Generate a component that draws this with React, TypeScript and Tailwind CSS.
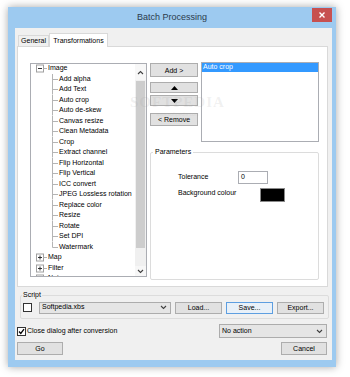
import React from "react";

const children = [
  "Add alpha",
  "Add Text",
  "Auto crop",
  "Auto de-skew",
  "Canvas resize",
  "Clean Metadata",
  "Crop",
  "Extract channel",
  "Flip Horizontal",
  "Flip Vertical",
  "ICC convert",
  "JPEG Lossless rotation",
  "Replace color",
  "Resize",
  "Rotate",
  "Set DPI",
  "Watermark",
];

function Chevron({ up = false }: { up?: boolean }) {
  return (
    <svg width="7" height="5" viewBox="0 0 7 5">
      <polyline
        points={up ? "1,4 3.5,1.5 6,4" : "1,1 3.5,3.5 6,1"}
        fill="none"
        stroke="#404040"
        strokeWidth="1.1"
      />
    </svg>
  );
}

function RootRow({ label, open }: { label: string; open: boolean }) {
  return (
    <div className="flex h-[10.5px] items-center">
      <svg width="16" height="10.5" viewBox="0 0 16 10.5" className="shrink-0">
        <rect x="5.5" y="2" width="7" height="7" fill="#fff" stroke="#a0a0a0" strokeWidth="1" />
        <line x1="7" y1="5.5" x2="11" y2="5.5" stroke="#333" strokeWidth="1" />
        {!open && <line x1="9" y1="3.5" x2="9" y2="7.5" stroke="#333" strokeWidth="1" />}
        <line x1="12.5" y1="5.5" x2="16" y2="5.5" stroke="#b4b4b4" strokeWidth="1" />
      </svg>
      <span className="whitespace-nowrap pl-px">{label}</span>
    </div>
  );
}

function ChildRow({ label, last }: { label: string; last: boolean }) {
  return (
    <div className="flex h-[10.5px] items-center">
      <svg width="28" height="10.5" viewBox="0 0 28 10.5" className="shrink-0">
        <line x1="21.5" y1="0" x2="21.5" y2={last ? 5.5 : 10.5} stroke="#b4b4b4" strokeWidth="1" />
        <line x1="21.5" y1="5.5" x2="27" y2="5.5" stroke="#b4b4b4" strokeWidth="1" />
      </svg>
      <span className="whitespace-nowrap">{label}</span>
    </div>
  );
}

function TreeView() {
  return (
    <div className="flex h-[214px] w-[117px] shrink-0 border border-[#abadb3] bg-white">
      <div className="flex-1 overflow-hidden">
        <div className="-mt-px">
          <RootRow label="Image" open />
          {children.map((c, i) => (
            <ChildRow key={c} label={c} last={i === children.length - 1} />
          ))}
          <RootRow label="Map" open={false} />
          <RootRow label="Filter" open={false} />
          <RootRow label="Noise" open={false} />
        </div>
      </div>
      <div className="flex w-[11px] flex-col bg-[#f0f0f0]">
        <div className="flex h-[16px] items-center justify-center bg-[#f7f7f7]">
          <Chevron up />
        </div>
        <div className="mx-px mt-px h-[167px] bg-[#cdcdcd]" />
        <div className="flex-1" />
        <div className="flex h-[10px] items-center justify-center bg-[#f7f7f7]">
          <Chevron />
        </div>
      </div>
    </div>
  );
}

function Btn({
  children,
  className = "",
  focused = false,
}: {
  children: React.ReactNode;
  className?: string;
  focused?: boolean;
}) {
  return (
    <div
      className={
        "flex items-center justify-center border text-[7px] leading-none " +
        (focused ? "border-[#5d9ee0] bg-[#e8f0f8] " : "border-[#adadad] bg-[#e1e1e1] ") +
        className
      }
    >
      {children}
    </div>
  );
}

function Combo({ value, className = "" }: { value: string; className?: string }) {
  return (
    <div
      className={
        "flex items-center justify-between border border-[#acacac] bg-[#e5e5e5] pl-[2px] pr-[3px] text-[7px] " +
        className
      }
    >
      <span>{value}</span>
      <Chevron />
    </div>
  );
}

function CheckBox({ checked = false }: { checked?: boolean }) {
  return (
    <div className="flex h-[9px] w-[9px] shrink-0 items-center justify-center border border-[#333] bg-white">
      {checked && (
        <svg width="7" height="7" viewBox="0 0 7 7">
          <polyline points="1,3.5 2.8,5.5 6,1.2" fill="none" stroke="#000" strokeWidth="1.3" />
        </svg>
      )}
    </div>
  );
}

export default function App() {
  return (
    <div className="h-[377px] w-[350px] overflow-hidden bg-white pl-[8px] pt-[7px] font-['Liberation_Sans',Arial,sans-serif] text-black">
      <div className="relative flex h-[360px] w-[328px] flex-col bg-[#9dcaf0] shadow-[0_0_8px_rgba(0,0,0,0.35)]">
        {/* title bar */}
        <div className="relative flex h-[21px] items-center justify-center text-[9px] text-[#2c3b4c]">
          Batch Processing
          <div className="absolute right-[4px] top-[1px] flex h-[14px] w-[20px] items-center justify-center bg-[#c75050]">
            <svg width="6" height="6" viewBox="0 0 6 6">
              <path d="M0.5 0.5 L5.5 5.5 M5.5 0.5 L0.5 5.5" stroke="#fff" strokeWidth="1.4" />
            </svg>
          </div>
        </div>

        {/* client */}
        <div className="mb-[7px] ml-[7px] mr-[4px] flex flex-1 flex-col bg-[#f0f0f0] pb-[5px] pt-[5px] text-[7px]">
          {/* tabs */}
          <div className="relative z-10 flex h-[13px] items-end pl-[3px]">
            <div className="flex h-[11px] w-[31px] items-center justify-center border border-b-0 border-[#d9d9d9] bg-[#f0f0f0]">
              General
            </div>
            <div className="-mb-px flex h-[14px] w-[59px] items-start justify-center border border-b-0 border-[#d9d9d9] bg-white pt-[2px]">
              Transformations
            </div>
          </div>

          <div className="ml-[2px] flex h-[241px] w-[311px] border border-[#d9d9d9] bg-white pl-[12px] pt-[16px]">
            <TreeView />

            <div className="-mt-px ml-[3px] flex w-[169px] flex-col">
              <div className="flex">
                <div className="flex w-[48px] flex-col pt-px">
                  <Btn className="h-[14px]">Add &gt;</Btn>
                  <Btn className="mt-[5px] h-[11px]">
                    <svg width="7" height="4" viewBox="0 0 7 4">
                      <polygon points="0,4 3.5,0 7,4" fill="#000" />
                    </svg>
                  </Btn>
                  <Btn className="mt-[2px] h-[11px]">
                    <svg width="7" height="4" viewBox="0 0 7 4">
                      <polygon points="0,0 7,0 3.5,4" fill="#000" />
                    </svg>
                  </Btn>
                  <Btn className="mt-[7px] h-[13px]">&lt; Remove</Btn>
                </div>
                <div className="ml-[3px] h-[80px] w-[118px] border border-[#abadb3] bg-white">
                  <div className="flex h-[9px] items-center bg-[#3399ff] pl-px text-white">Auto crop</div>
                </div>
              </div>

              <fieldset className="mt-[6px] h-[132px] rounded-[2px] border border-[#dcdcdc]">
                <legend className="ml-[2px] px-[2px] leading-[8px]">Parameters</legend>
                <div className="flex flex-col pl-[27px] pt-[15px]">
                  <div className="flex h-[13px] items-center">
                    <span className="w-[60px]">Tolerance</span>
                    <div className="flex h-[13px] w-[30px] items-center border border-[#abadb3] bg-white pl-[2px]">
                      0
                    </div>
                  </div>
                  <div className="mt-[4px] flex h-[14px] items-center">
                    <span className="w-[82px] -translate-y-[2px]">Background colour</span>
                    <div className="h-[14px] w-[25px] border border-[#8a8a8a] bg-black" />
                  </div>
                </div>
              </fieldset>
            </div>
          </div>

          {/* script */}
          <fieldset className="ml-[5px] mt-[4px] w-[309px] rounded-[2px] border border-[#dcdcdc]">
            <legend className="ml-[1px] px-px leading-[8px]">Script</legend>
            <div className="mb-[4px] mt-[2px] flex h-[13px] items-center pl-[2px] pr-[4px]">
              <CheckBox />
              <Combo value="Softpedia.xbs" className="ml-[7px] h-[12px] w-[132px]" />
              <Btn className="ml-[4px] h-[12px] w-[47px]">Load...</Btn>
              <Btn focused className="ml-[4px] h-[12px] w-[47px]">
                Save...
              </Btn>
              <Btn className="ml-[4px] h-[12px] w-[47px]">Export...</Btn>
            </div>
          </fieldset>

          <div className="mt-[5px] flex h-[14px] items-center pl-[2px] pr-[5px]">
            <CheckBox checked />
            <span className="ml-px">Close dialog after conversion</span>
            <Combo value="No action" className="ml-auto h-[14px] w-[108px]" />
          </div>

          <div className="mt-[4px] flex h-[13px] items-center justify-between pl-[2px] pr-[5px]">
            <Btn className="h-[13px] w-[46px]">Go</Btn>
            <Btn className="h-[13px] w-[46px]">Cancel</Btn>
          </div>
        </div>

        {/* softpedia watermark */}
        <div className="pointer-events-none absolute left-[122px] top-[88px] flex flex-col items-center text-[rgba(150,150,150,0.14)]">
          <span className="font-['Liberation_Serif',serif] text-[15px] font-bold leading-none tracking-[1px]">
            SOFTPEDIA
          </span>
          <span className="mt-[2px] text-[5px] leading-none">www.softpedia.com</span>
        </div>
      </div>
    </div>
  );
}
